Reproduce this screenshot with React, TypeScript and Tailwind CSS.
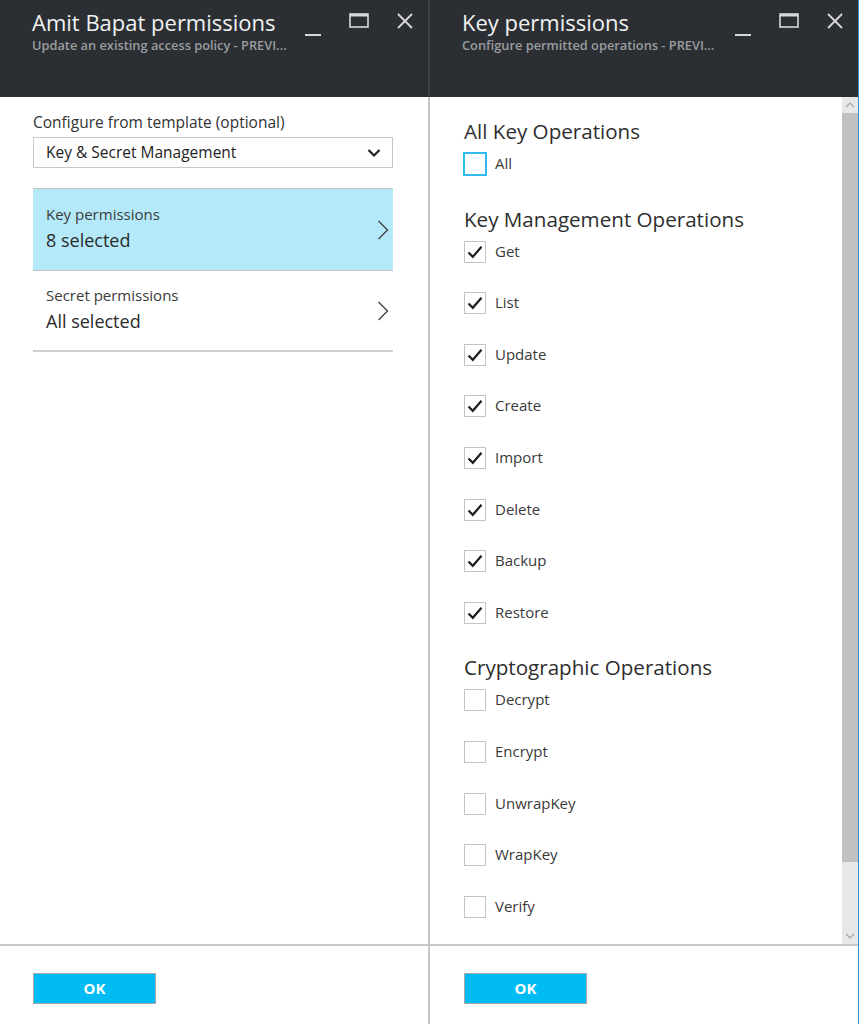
import React from "react";

const font = { fontFamily: '"Open Sans", "Noto Sans", sans-serif' };

const keyOps = ["Get", "List", "Update", "Create", "Import", "Delete", "Backup", "Restore"];
const cryptoOps = ["Decrypt", "Encrypt", "UnwrapKey", "WrapKey", "Verify"];

const WindowButtons = ({ gap }: { gap: string }) => (
  <div className={`flex items-start ${gap} pt-[13px]`}>
    <svg width="16" height="24" viewBox="0 0 16 24" className="text-[#d8d8d8]">
      <rect x="0" y="21" width="16" height="2" fill="currentColor" />
    </svg>
    <svg width="20" height="16" viewBox="0 0 20 16" className="text-[#d8d8d8]">
      <rect x="1" y="1" width="18" height="13" fill="none" stroke="currentColor" strokeWidth="1.6" />
      <rect x="1" y="1" width="18" height="2.5" fill="currentColor" />
    </svg>
    <svg width="16" height="16" viewBox="0 0 16 16" className="text-[#d8d8d8]">
      <path d="M1 1 L15 15 M15 1 L1 15" stroke="currentColor" strokeWidth="1.8" />
    </svg>
  </div>
);

const Header = ({ title, sub, gap }: { title: string; sub: string; gap: string }) => (
  <div className="h-[97px] bg-[#2b2f34] flex justify-between pl-[32px] pr-[15px]">
    <div className="pt-[6px]">
      <div className="text-[22px] leading-[32px] text-[#f2f2f2]">{title}</div>
      <div className="text-[12.8px] leading-[16px] font-semibold text-[#9a9c9e] -mt-[1px]">{sub}</div>
    </div>
    <WindowButtons gap={gap} />
  </div>
);

const ChevronRight = () => (
  <svg width="12" height="20" viewBox="0 0 12 20" className="text-[#444]">
    <path d="M1.5 1 L10.5 10 L1.5 19" fill="none" stroke="currentColor" strokeWidth="1.4" />
  </svg>
);

const Footer = ({ left }: { left: string }) => (
  <div className={`h-[80px] border-t-2 border-[#c8c8c8] pt-[27px] ${left}`}>
    <button className="w-[123px] h-[31px] bg-[#00bcf2] border border-[#a8a8a8] text-white font-bold text-[15px] leading-none">
      OK
    </button>
  </div>
);

const Check = ({ label, checked, focus }: { label: string; checked?: boolean; focus?: boolean }) => (
  <div className="h-[51.6px] flex items-start gap-[9px]">
    {focus ? (
      <div className="w-[24px] h-[24px] -ml-[1px] -mt-[1px] border-2 border-[#31bbf0] bg-white" />
    ) : (
      <div className="w-[22px] h-[22px] border border-[#c4c4c4] bg-white flex items-center justify-center">
        {checked && (
          <svg width="16" height="14" viewBox="0 0 16 14">
            <path d="M1.5 7.5 L5.8 11.8 L14.5 1.8" fill="none" stroke="#1e1e1e" strokeWidth="2.2" />
          </svg>
        )}
      </div>
    )}
    <div className={`text-[15px] leading-[20px] text-[#3a3a3a] ${focus ? "-ml-[1px]" : ""}`}>{label}</div>
  </div>
);

const Heading = ({ children }: { children: React.ReactNode }) => (
  <div className="text-[20.6px] leading-[28px] text-[#2e2e2e] mb-[8px]">{children}</div>
);

const NavRow = ({ title, value, selected }: { title: string; value: string; selected?: boolean }) => (
  <div
    className={
      selected
        ? "mt-[20px] h-[83px] bg-[#b3e9f8] border-t border-b border-[#c4c4c4] flex items-center justify-between pl-[13px] pr-[4px]"
        : "h-[81px] border-b-2 border-[#d0d0d0] flex items-center justify-between pl-[13px] pr-[4px]"
    }
  >
    <div className="-mt-[2px]">
      <div className="text-[15px] leading-[20px] text-[#3b3b3b]">{title}</div>
      <div className="text-[18px] leading-[26px] text-[#2b2b2b] mt-[3px]">{value}</div>
    </div>
    <ChevronRight />
  </div>
);

export default function App() {
  return (
    <div className="w-[859px] h-[1024px] flex bg-white overflow-hidden" style={font}>
      {/* left blade */}
      <div className="w-[428px] flex flex-col">
        <Header title="Amit Bapat permissions" sub="Update an existing access policy - PREVI..." gap="gap-[28px]" />
        <div className="flex-1 px-[33px] pt-[15px] pr-[35px]">
          <div className="text-[15.5px] leading-[20px] text-[#333]">Configure from template (optional)</div>
          <div className="mt-[5px] h-[31px] border border-[#c8c8c8] flex items-center justify-between pl-[12px] pr-[11px]">
            <span className="text-[15.5px] text-[#222]">Key &amp; Secret Management</span>
            <svg width="14" height="10" viewBox="0 0 14 10">
              <path d="M1.5 2 L7 7.5 L12.5 2" fill="none" stroke="#222" strokeWidth="2.2" />
            </svg>
          </div>
          <NavRow title="Key permissions" value="8 selected" selected />
          <NavRow title="Secret permissions" value="All selected" />
        </div>
        <Footer left="pl-[33px]" />
      </div>

      {/* divider */}
      <div className="w-[2px] flex flex-col">
        <div className="h-[97px] bg-[#3d4146]" />
        <div className="flex-1 bg-[#c6c6c6]" />
      </div>

      {/* right blade */}
      <div className="flex-1 flex flex-col border-r border-[#2f8fd0]">
        <Header title="Key permissions" sub="Configure permitted operations - PREVI..." gap="gap-[28px]" />
        <div className="flex-1 flex overflow-hidden">
          <div className="flex-1 pl-[34px] pt-[20px] overflow-hidden">
            <Heading>All Key Operations</Heading>
            <Check label="All" focus />
            <Heading>Key Management Operations</Heading>
            {keyOps.map((op) => (
              <Check key={op} label={op} checked />
            ))}
            <Heading>Cryptographic Operations</Heading>
            {cryptoOps.map((op) => (
              <Check key={op} label={op} />
            ))}
          </div>
          {/* scrollbar */}
          <div className="w-[16px] bg-[#e8e8e8] flex flex-col">
            <div className="h-[16px] flex items-center justify-center">
              <svg width="10" height="6" viewBox="0 0 10 6">
                <path d="M1 5 L5 1 L9 5" fill="none" stroke="#a6a6a6" strokeWidth="1.2" />
              </svg>
            </div>
            <div className="h-[749px] bg-[#c1c1c1]" />
            <div className="flex-1" />
            <div className="h-[16px] flex items-center justify-center">
              <svg width="10" height="6" viewBox="0 0 10 6">
                <path d="M1 1 L5 5 L9 1" fill="none" stroke="#a6a6a6" strokeWidth="1.2" />
              </svg>
            </div>
          </div>
        </div>
        <Footer left="pl-[34px]" />
      </div>
    </div>
  );
}
